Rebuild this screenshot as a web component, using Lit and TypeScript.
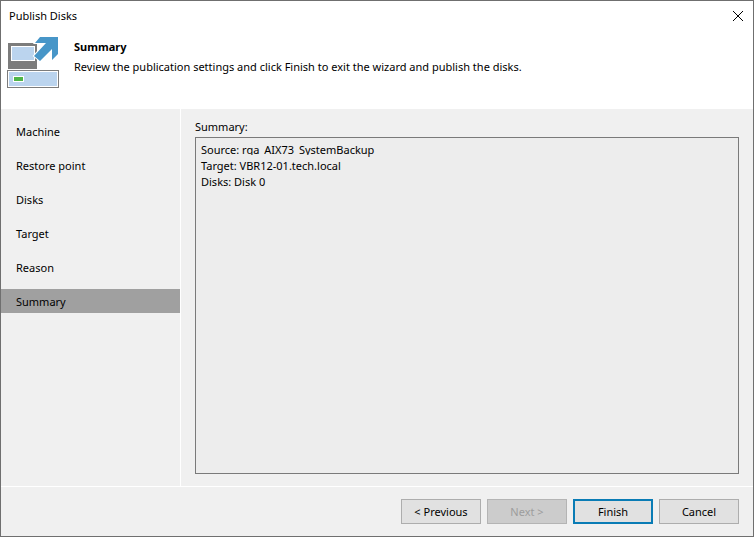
import { LitElement, html, css, svg } from "lit";
import { customElement, state } from "lit/decorators.js";

const steps = ["Machine", "Restore point", "Disks", "Target", "Reason", "Summary"];

const diskIcon = svg`
  <path fill="#7c7c7c" d="M1 7h29v26H1z"/>
  <path fill="#fff" d="M4 10h24v15H4z"/>
  <path fill="#bbd4ee" d="M5 11h22v13H5z"/>
  <path fill="#7c7c7c" d="M0 34h52v18H0z"/>
  <path fill="#fff" d="M1 35h50v16H1z"/>
  <path fill="#bbd4ee" d="M2 36h48v14H2z"/>
  <path fill="#fff" d="M6 40h11v6H6z"/>
  <path fill="#4fb548" d="M7 41h9v4H7z"/>
  <path fill="#4796c8" stroke="#fff" stroke-width="2" paint-order="stroke"
    d="M33 1h18v17l-6 6V13L33 25l-6-5L39 7H28z"/>`;

@customElement("app-root")
export class AppRoot extends LitElement {
  @state() current = "Summary";

  static styles = css`
    :host {
      display: flex;
      flex-direction: column;
      box-sizing: border-box;
      min-height: 100vh;
      border: 1px solid #6f6f6f;
      background: #f0f0f0;
      color: #000;
      font: 11px/16px "Noto Sans", "Open Sans", sans-serif;
    }
    header {
      padding-bottom: 21px;
      background: #fff;
    }
    .titlebar {
      display: flex;
      align-items: center;
      justify-content: space-between;
      height: 29px;
      padding: 0 10px 0 8px;
    }
    button {
      font: inherit;
      color: inherit;
    }
    .close {
      display: flex;
      border: 0;
      padding: 0;
      background: none;
    }
    .intro {
      display: flex;
      gap: 15px;
      padding: 6px 6px 0;
    }
    .intro svg {
      flex: none;
    }
    h1 {
      margin: 3px 0 4px;
      font-size: 11px;
      line-height: 16px;
    }
    p {
      margin: 0;
    }
    .body {
      flex: 1;
      display: flex;
    }
    nav {
      display: flex;
      flex-direction: column;
      gap: 10px;
      width: 179px;
      padding-top: 10px;
      border-right: 1px solid #fff;
    }
    .step {
      padding: 5px 15px 3px;
      color: inherit;
      text-decoration: none;
    }
    .step.current {
      background: #a0a0a0;
    }
    main {
      flex: 1;
      display: flex;
      flex-direction: column;
      padding: 10px 14px 12px;
    }
    .label {
      margin-bottom: 2px;
    }
    .box {
      flex: 1;
      padding: 4px 5px;
      border: 1px solid #7a7a7a;
      background: #ededed;
    }
    .line {
      height: 16px;
      white-space: nowrap;
    }
    .clip {
      display: inline-block;
      height: 13px;
      overflow: hidden;
      vertical-align: top;
    }
    footer {
      display: flex;
      justify-content: flex-end;
      gap: 6px;
      padding: 12px 14px;
      border-top: 1px solid #fff;
    }
    .btn {
      width: 80px;
      height: 25px;
      padding: 0;
      border: 1px solid #adadad;
      background: #e1e1e1;
    }
    .btn:disabled {
      background: #cccccc;
      border-color: #b4b4b4;
      color: #9d9d9d;
    }
    .btn.primary {
      border: 2px solid #0a7cb5;
    }
  `;

  private select(e: Event, step: string) {
    e.preventDefault();
    this.current = step;
  }

  render() {
    return html`
      <header>
        <div class="titlebar">
          <span>Publish Disks</span>
          <button class="close" aria-label="Close">
            <svg width="10" height="10" viewBox="0 0 10 10" fill="none" stroke="#000">
              <path d="M0 0l10 10M10 0L0 10" />
            </svg>
          </button>
        </div>
        <div class="intro">
          <svg width="52" height="52" viewBox="0 0 52 52" aria-hidden="true">${diskIcon}</svg>
          <div>
            <h1>Summary</h1>
            <p>Review the publication settings and click Finish to exit the wizard and publish the disks.</p>
          </div>
        </div>
      </header>
      <div class="body">
        <nav>
          ${steps.map(
            (s) => html`<a href="#" class="step ${s === this.current ? "current" : ""}"
              @click=${(e: Event) => this.select(e, s)}>${s}</a>`
          )}
        </nav>
        <main>
          <div class="label" id="summary-label">Summary:</div>
          <div class="box" role="region" aria-labelledby="summary-label">
            <div class="line"><span class="clip">Source: rqa_AIX73_System</span>Backup</div>
            <div class="line">Target: VBR12-01.tech.local</div>
            <div class="line">Disks: Disk 0</div>
          </div>
        </main>
      </div>
      <footer>
        <button class="btn">&lt; Previous</button>
        <button class="btn" disabled>Next &gt;</button>
        <button class="btn primary">Finish</button>
        <button class="btn">Cancel</button>
      </footer>
    `;
  }
}
